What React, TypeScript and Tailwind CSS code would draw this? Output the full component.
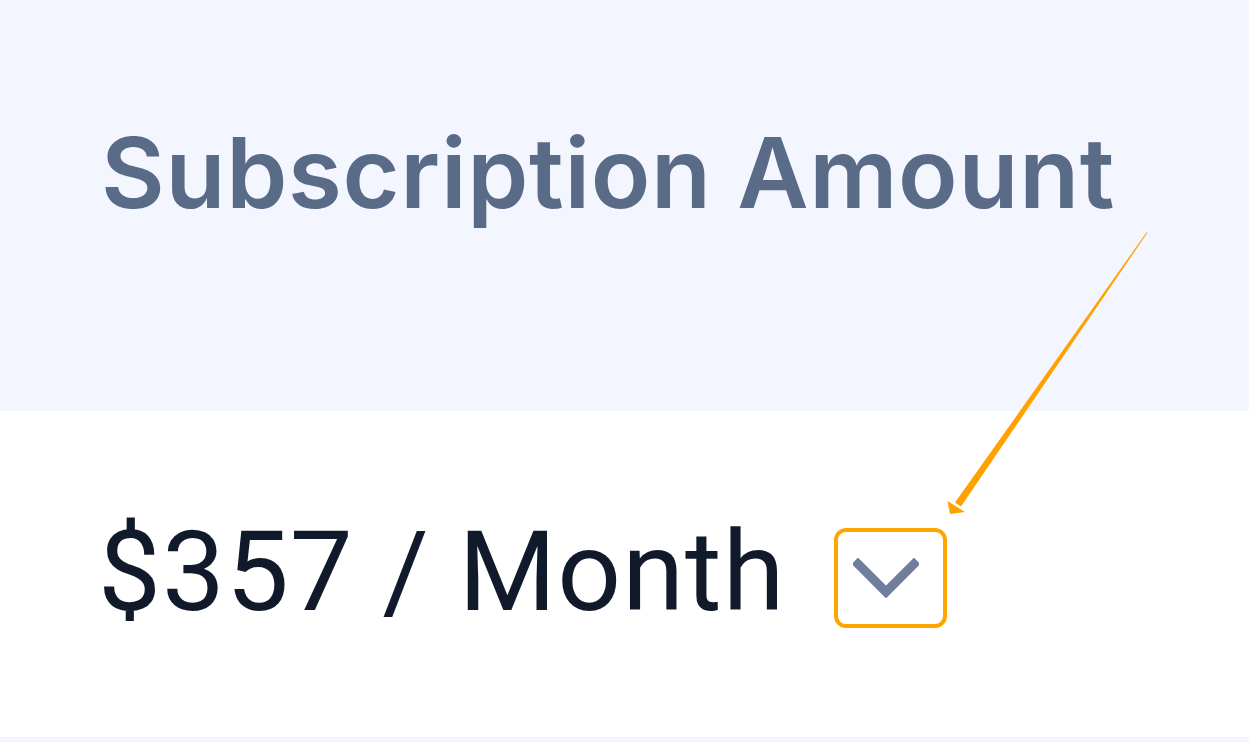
import React from "react";

const ChevronDown: React.FC = () => (
  <svg viewBox="0 0 66 40" className="w-[66px] h-[40px]" fill="none">
    <polyline
      points="5,6 33,34 61,6"
      stroke="#6e7e9c"
      strokeWidth="9"
      strokeLinecap="square"
      strokeLinejoin="miter"
    />
  </svg>
);

const Arrow: React.FC = () => (
  <svg
    className="absolute inset-0 w-full h-full pointer-events-none"
    viewBox="0 0 1249 742"
  >
    {/* tapered shaft */}
    <polygon points="1146.6,232.3 1147.4,232.8 961,506.5 955,502.5" fill="#ffa200" />
    {/* head */}
    <polygon points="950,514 947.5,501 965,512" fill="#ffa200" />
  </svg>
);

export default function App() {
  return (
    <div className="relative w-full h-[742px] flex flex-col bg-white overflow-hidden font-['Roboto',sans-serif]">
      {/* header cell */}
      <div className="h-[411px] bg-[#f3f6fe] pl-[101px] pt-[124px]">
        <div className="font-['Inter',sans-serif] text-[98px] leading-none font-semibold text-[#5a6b87] tracking-[0.7px]">
          Subscription Amount
        </div>
      </div>

      {/* value cell */}
      <div className="h-[326px] bg-white pl-[98px] pt-[105px]">
        <div className="flex items-start">
          <span className="text-[112px] leading-none text-[#111a2b] tracking-[1px]">
            $357 / Month
          </span>
          <div className="ml-[49px] mt-[12px] w-[113px] h-[100px] border-[4px] border-[#ffa500] rounded-[12px] flex items-center justify-center pr-[10px]">
            <ChevronDown />
          </div>
        </div>
      </div>

      <div className="flex-1 bg-[#f3f6fe]" />

      <Arrow />
    </div>
  );
}
